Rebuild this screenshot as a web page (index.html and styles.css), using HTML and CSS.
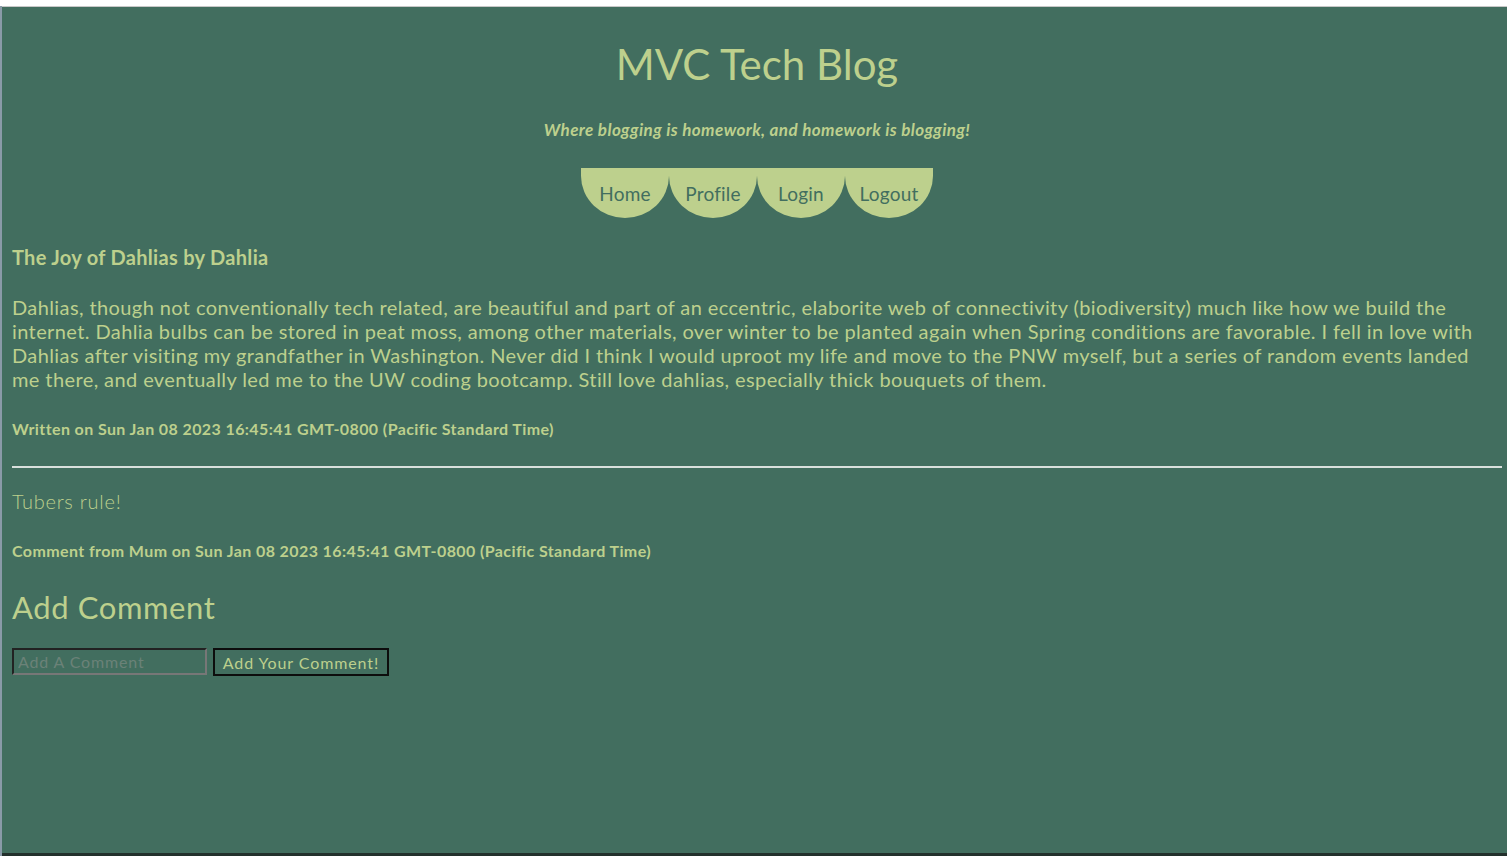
FILE: index.html
```html
<!DOCTYPE html>
<html lang="en">
<head>
<meta charset="utf-8">
<title>MVC Tech Blog</title>
<link rel="stylesheet" href="styles.css">
</head>
<body>
<div class="screen">
  <div class="edge"></div>
  <div class="page">
    <header class="header">
      <h1 class="site-title">MVC Tech Blog</h1>
      <p class="tagline">Where blogging is homework, and homework is blogging!</p>
      <nav class="nav">
        <a class="nav-item" href="#">Home</a>
        <a class="nav-item" href="#">Profile</a>
        <a class="nav-item" href="#">Login</a>
        <a class="nav-item" href="#">Logout</a>
      </nav>
    </header>
    <main class="content">
      <h2 class="post-title">The Joy of Dahlias by Dahlia</h2>
      <p class="post-body">Dahlias, though not conventionally tech related, are beautiful and part of an eccentric, elaborite web of connectivity (biodiversity) much like how we build the internet. Dahlia bulbs can be stored in peat moss, among other materials, over winter to be planted again when Spring conditions are favorable. I fell in love with Dahlias after visiting my grandfather in Washington. Never did I think I would uproot my life and move to the PNW myself, but a series of random events landed me there, and eventually led me to the UW coding bootcamp. Still love dahlias, especially thick bouquets of them.</p>
      <p class="meta">Written on Sun Jan 08 2023 16:45:41 GMT-0800 (Pacific Standard Time)</p>
      <hr class="divider">
      <p class="comment-body">Tubers rule!</p>
      <p class="meta">Comment from Mum on Sun Jan 08 2023 16:45:41 GMT-0800 (Pacific Standard Time)</p>
      <h2 class="add-title">Add Comment</h2>
      <form class="comment-form">
        <input class="comment-input" type="text" placeholder="Add A Comment">
        <button class="comment-btn" type="button">Add Your Comment!</button>
      </form>
    </main>
  </div>
  <div class="bottom-bar"></div>
</div>
</body>
</html>
```
FILE: styles.css
```css
html, body {
  margin: 0;
  padding: 0;
  background: #ffffff;
}
body {
  font-family: Lato, "Open Sans", sans-serif;
  color: #bdd08d;
}
.screen {
  height: 856px;
  padding-top: 6px;
  box-sizing: border-box;
  display: grid;
  grid-template-columns: 2px 1fr;
  grid-template-rows: 1fr 3px;
  overflow: hidden;
}
.edge {
  grid-row: 1 / 3;
  background: #8a9aa8;
}
.page {
  background: #426e5f;
  border-top: 1px solid #c8c8c8;
  padding: 0 5px 0 10px;
  overflow: hidden;
}
.bottom-bar {
  background: #23302c;
}
.header {
  display: flex;
  flex-direction: column;
  align-items: center;
}
.site-title {
  margin: 32px 0 0;
  font-size: 42px;
  line-height: 50px;
  font-weight: 400;
  letter-spacing: 0;
}
.tagline {
  margin: 31px 0 0;
  font-size: 17px;
  line-height: 20px;
  font-style: italic;
  font-weight: 700;
  letter-spacing: 0.4px;
}
.nav {
  margin-top: 28px;
  display: flex;
}
.nav-item {
  width: 88px;
  height: 50px;
  background: #bdd08d;
  border-radius: 0 0 44px 44px / 0 0 42px 42px;
  color: #426e5f;
  text-decoration: none;
  font-size: 19px;
  letter-spacing: 0.2px;
  display: flex;
  align-items: center;
  justify-content: center;
}
.content {
  display: flex;
  flex-direction: column;
  align-items: flex-start;
}
.post-title {
  margin: 27px 0 0;
  font-size: 20px;
  line-height: 24px;
  font-weight: 700;
  letter-spacing: 0.3px;
}
.post-body {
  margin: 26px 0 0;
  font-size: 20px;
  line-height: 24px;
  font-weight: 400;
  letter-spacing: 0.4px;
}
.meta {
  margin: 28px 0 0;
  font-size: 16px;
  line-height: 20px;
  font-weight: 700;
  letter-spacing: 0.4px;
}
.divider {
  align-self: stretch;
  margin: 27px 0 0;
  border: 0;
  border-top: 2px solid #d9e0dc;
}
.comment-body {
  margin: 21px 0 0;
  font-size: 20px;
  line-height: 24px;
  font-weight: 300;
  letter-spacing: 0.75px;
}
.add-title {
  margin: 28px 0 0;
  font-size: 31px;
  line-height: 36px;
  font-weight: 400;
  letter-spacing: 0.6px;
}
.comment-form {
  margin-top: 23px;
  display: flex;
  gap: 6px;
}
.comment-input {
  width: 195px;
  height: 27px;
  box-sizing: border-box;
  background: #426e5f;
  border: 2px solid;
  border-color: #222 #777 #777 #222;
  color: #bdd08d;
  font-family: Lato, sans-serif;
  font-size: 16px;
  letter-spacing: 0.85px;
  padding: 0 4px;
}
.comment-input::placeholder {
  color: #6b8278;
}
.comment-btn {
  width: 176px;
  height: 28px;
  box-sizing: border-box;
  background: #426e5f;
  border: 2px solid #0d0d0d;
  color: #bdd08d;
  font-family: Lato, sans-serif;
  font-size: 16px;
  letter-spacing: 0.9px;
  padding: 0;
}
```
